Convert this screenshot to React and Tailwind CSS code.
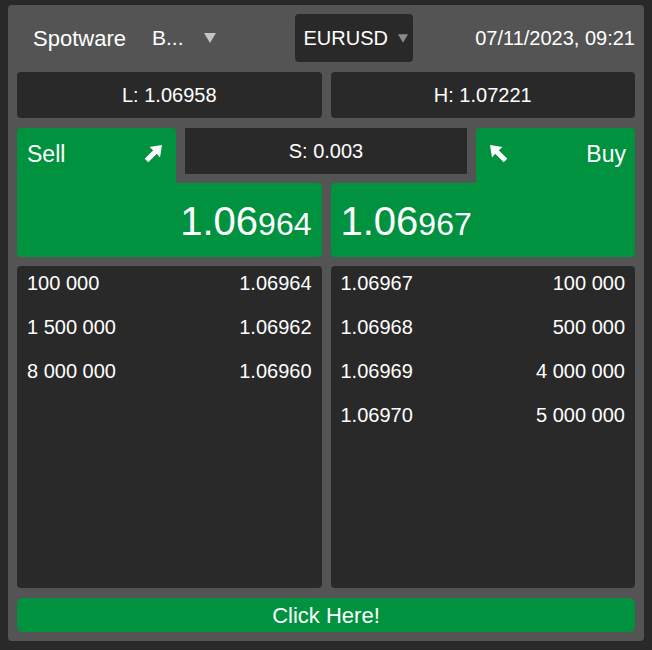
const sellDepth = [
  ['100 000', '1.06964'],
  ['1 500 000', '1.06962'],
  ['8 000 000', '1.06960'],
];

const buyDepth = [
  ['1.06967', '100 000'],
  ['1.06968', '500 000'],
  ['1.06969', '4 000 000'],
  ['1.06970', '5 000 000'],
];

function Caret({ className }) {
  return (
    <svg viewBox="0 0 12 10" className={className} aria-hidden="true">
      <polygon points="0,0 12,0 6,10" fill="currentColor" />
    </svg>
  );
}

function SellArrow() {
  return (
    <svg viewBox="0 0 18 18" className="h-[18px] w-[18px]" aria-hidden="true">
      <polygon points="18,0 16,12.5 12.8,8.8 4.3,17.3 0.7,13.7 9.2,5.2 5.5,2" fill="#fff" />
    </svg>
  );
}

function BuyArrow() {
  return (
    <svg viewBox="0 0 18 18" className="h-[18px] w-[18px]" aria-hidden="true">
      <polygon points="0,0 2,12.5 5.2,8.8 13.7,17.3 17.3,13.7 8.8,5.2 12.5,2" fill="#fff" />
    </svg>
  );
}

function Price({ big, small }) {
  return (
    <span className="leading-none">
      <span className="text-[40px]">{big}</span>
      <span className="text-[32px]">{small}</span>
    </span>
  );
}

function DepthPanel({ rows }) {
  return (
    <div className="flex flex-col gap-[22px] rounded bg-[#292929] pl-[10px] pr-[10px] pt-[6px]">
      {rows.map(([a, b]) => (
        <div key={a + b} className="flex h-[22px] items-center justify-between text-[20px] leading-[22px]">
          <span>{a}</span>
          <span>{b}</span>
        </div>
      ))}
    </div>
  );
}

export default function App() {
  return (
    <div className="min-h-screen bg-[#292929] pt-[5px] font-['Liberation_Sans',Arial,sans-serif] text-white">
      <div className="ml-[8px] flex w-[636px] flex-col rounded bg-[#545454] p-[9px]">
        {/* Header */}
        <div className="flex h-[48px] items-center">
          <span className="ml-[16px] text-[22px]">Spotware</span>
          <span className="ml-[26px] text-[21px]">B...</span>
          <Caret className="ml-[21px] h-[10px] w-[12px] text-[#c4c4c4]" />
          <div className="ml-[79px] flex h-[48px] w-[118px] items-center rounded bg-[#292929] pl-[8px]">
            <span className="text-[20px]">EURUSD</span>
            <Caret className="ml-[10px] h-[9px] w-[10px] text-[#8a8a8a]" />
          </div>
          <span className="ml-auto text-[20px]">07/11/2023, 09:21</span>
        </div>

        {/* Low / High */}
        <div className="mt-[10px] grid grid-cols-2 gap-[9px] text-[20px]">
          <div className="flex h-[46px] items-center justify-center rounded bg-[#292929]">L: 1.06958</div>
          <div className="flex h-[46px] items-center justify-center rounded bg-[#292929]">H: 1.07221</div>
        </div>

        {/* Sell / Buy */}
        <div className="mt-[10px] flex flex-col">
          <div className="flex h-[55px] items-start gap-[9px]">
            <div className="flex h-[55px] w-[159px] items-center justify-between rounded-t bg-[#00923f] pb-[3px] pl-[10px] pr-[14px]">
              <span className="text-[23px]">Sell</span>
              <SellArrow />
            </div>
            <div className="flex h-[46px] flex-1 items-center justify-center bg-[#292929] text-[20px]">S: 0.003</div>
            <div className="flex h-[55px] w-[159px] items-center justify-between rounded-t bg-[#00923f] pb-[3px] pl-[14px] pr-[9px]">
              <BuyArrow />
              <span className="text-[23px]">Buy</span>
            </div>
          </div>
          <div className="grid grid-cols-2 gap-[9px]">
            <div className="flex h-[74px] items-center justify-end rounded-b rounded-tr bg-[#00923f] pr-[10px] pt-[2px]">
              <Price big="1.06" small="964" />
            </div>
            <div className="flex h-[74px] items-center rounded-b rounded-tl bg-[#00923f] pl-[10px] pt-[2px]">
              <Price big="1.06" small="967" />
            </div>
          </div>
        </div>

        {/* Depth of market */}
        <div className="mt-[9px] grid h-[322px] grid-cols-2 gap-[9px]">
          <DepthPanel rows={sellDepth} />
          <DepthPanel rows={buyDepth} />
        </div>

        <button
          type="button"
          className="mt-[10px] flex h-[34px] items-center justify-center rounded-md bg-[#00923f] text-[22px]"
        >
          Click Here!
        </button>
      </div>
    </div>
  );
}
